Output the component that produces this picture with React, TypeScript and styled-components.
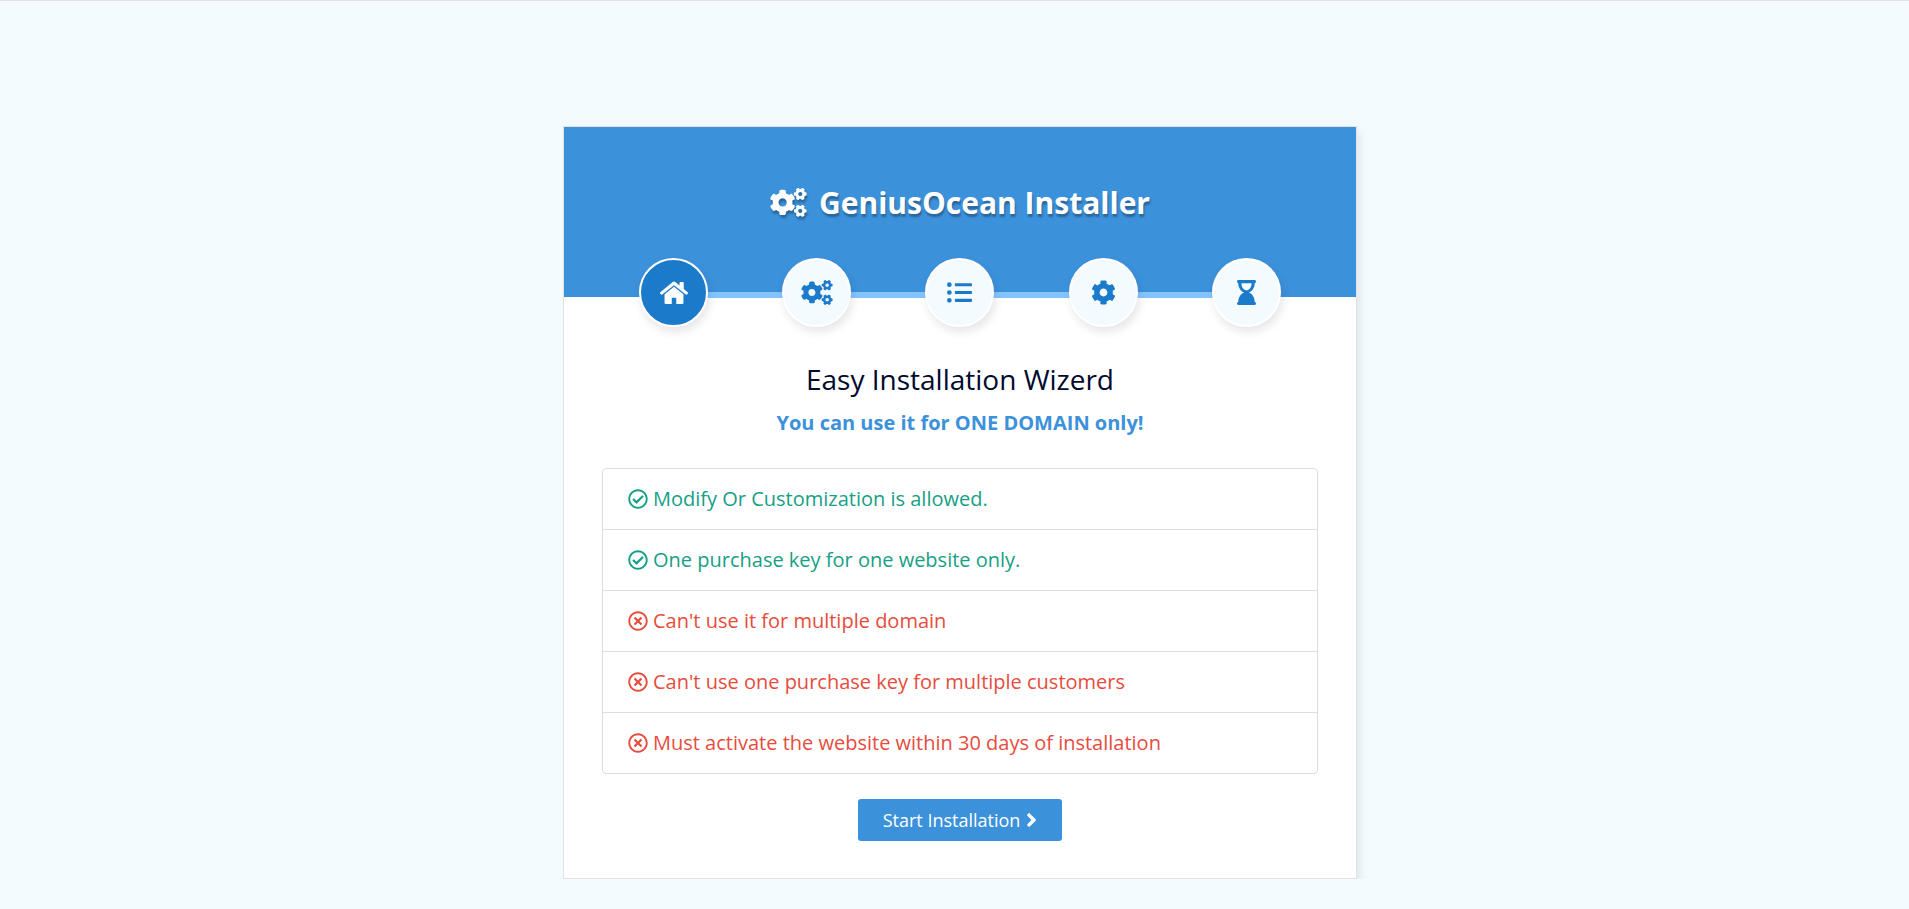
import React from "react";
import styled, { createGlobalStyle } from "styled-components";
import {
  FaCog,
  FaCogs,
  FaHourglassEnd,
  FaListUl,
  FaAngleRight,
  FaRegCheckCircle,
  FaRegTimesCircle,
} from "react-icons/fa";

const GlobalStyle = createGlobalStyle`
  *, *::before, *::after { box-sizing: border-box; }
  body {
    margin: 0;
    background: #f3fbff;
    color: #00092e;
    font-family: "Open Sans", sans-serif;
    font-size: 16px;
  }
`;

const Page = styled.main`
  min-height: 100vh;
  border-top: 1px solid #dee2ee;
  padding: 125px 0 30px 11px;
`;

const Card = styled.section`
  max-width: 794px;
  margin: 0 auto;
  background: #fff;
  border: 1px solid #e2e2e6;
  box-shadow: 2px 5px 10px rgba(0, 0, 0, 0.1);
  clip-path: inset(0 -16px 0 0);
`;

const Header = styled.header`
  height: 170px;
  padding: 53px 38px 0;
  background: #3c91db;
`;

const Title = styled.h1`
  display: flex;
  align-items: center;
  justify-content: center;
  gap: 12px;
  margin: 0 0 33px;
  color: #fff;
  font-size: 30px;
  font-weight: 700;
  line-height: 45px;
  text-shadow: 1px 3px 2px rgba(0, 0, 0, 0.3);

  svg {
    width: 37px;
    height: 29px;
    filter: drop-shadow(1px 3px 1px rgba(0, 0, 0, 0.3));
  }
`;

const Steps = styled.ol`
  position: relative;
  display: grid;
  grid-template-columns: repeat(5, 1fr);
  margin: 0;
  padding: 0;
  list-style: none;

  &::before {
    content: "";
    position: absolute;
    top: 34px;
    left: 10%;
    right: 10%;
    height: 6px;
    background: #83c4ff;
  }
`;

const Step = styled.li<{ $active?: boolean }>`
  position: relative;
  display: flex;
  align-items: center;
  justify-content: center;
  justify-self: center;
  width: 69px;
  height: 69px;
  border: 2px solid #fff;
  border-radius: 50%;
  background: ${(p) => (p.$active ? "#1c7acb" : "#f3fbff")};
  color: ${(p) => (p.$active ? "#fff" : "#1c7acb")};
  box-shadow: 2px 5px 10px rgba(0, 0, 0, 0.1);
`;

const StepIcon = styled.span<{ $width: number }>`
  display: flex;

  svg {
    width: ${(p) => p.$width}px;
    height: 25px;
  }
`;

const Body = styled.div`
  padding: 60px 38px 37px;
  text-align: center;
`;

const Heading = styled.h2`
  margin: 0;
  font-size: 28px;
  font-weight: 400;
  line-height: 44px;
`;

const Notice = styled.p`
  margin: 7px 0 30px;
  color: #3c91db;
  font-size: 20px;
  font-weight: 700;
  line-height: 30px;
`;

const Rules = styled.ul`
  margin: 0 0 25px;
  padding: 0;
  border: 1px solid #dedede;
  border-radius: 4px;
  list-style: none;
  text-align: left;
`;

const Rule = styled.li<{ $allowed: boolean }>`
  display: flex;
  align-items: center;
  gap: 5px;
  padding: 15px 25px;
  color: ${(p) => (p.$allowed ? "#16a085" : "#e74c3c")};
  font-size: 20px;
  line-height: 30px;

  & + & {
    border-top: 1px solid #dedede;
  }
`;

const StartButton = styled.button`
  display: inline-flex;
  align-items: center;
  gap: 6px;
  padding: 6px 25px;
  border: 0;
  border-radius: 3px;
  background: #3c91db;
  color: #fff;
  font: 400 18px/30px "Open Sans", sans-serif;
  cursor: pointer;

  svg {
    width: 11px;
    height: 22px;
  }
`;

const HomeIcon = () => (
  <svg viewBox="0 -3 86 75" fill="currentColor" aria-hidden>
    <path d="M39 2.5q4-3.5 8 0L60 13V5q0-3 3-3h7q3 0 3 3v19l12 9.500q2 2 .5 4l-2 2.500q-2 2-4 .5L43 12 6.500 40.500q-2 1.500-4-.5l-2-2.500q-1.500-2 .5-4z" />
    <path d="M43 17 72 40v26q0 4-4 4H50V54q0-3-3-3h-8q-3 0-3 3v16H18q-4 0-4-4V40z" />
  </svg>
);

const steps = [
  { name: "Welcome", Icon: HomeIcon, width: 28 },
  { name: "Requirements", Icon: FaCogs, width: 32 },
  { name: "Permissions", Icon: FaListUl, width: 25 },
  { name: "Configuration", Icon: FaCog, width: 25 },
  { name: "Finish", Icon: FaHourglassEnd, width: 19 },
];

const rules = [
  { text: "Modify Or Customization is allowed.", allowed: true },
  { text: "One purchase key for one website only.", allowed: true },
  { text: "Can't use it for multiple domain", allowed: false },
  { text: "Can't use one purchase key for multiple customers", allowed: false },
  { text: "Must activate the website within 30 days of installation", allowed: false },
];

export default function App() {
  return (
    <>
      <GlobalStyle />
      <Page>
        <Card>
          <Header>
            <Title>
              <FaCogs aria-hidden />
              <span>GeniusOcean Installer</span>
            </Title>
            <Steps>
              {steps.map(({ name, Icon, width }, i) => (
                <Step key={name} $active={i === 0} aria-label={name}>
                  <StepIcon $width={width}>
                    <Icon />
                  </StepIcon>
                </Step>
              ))}
            </Steps>
          </Header>
          <Body>
            <Heading>Easy Installation Wizerd</Heading>
            <Notice>You can use it for ONE DOMAIN only!</Notice>
            <Rules>
              {rules.map(({ text, allowed }) => (
                <Rule key={text} $allowed={allowed}>
                  {allowed ? <FaRegCheckCircle aria-hidden /> : <FaRegTimesCircle aria-hidden />}
                  <span>{text}</span>
                </Rule>
              ))}
            </Rules>
            <StartButton type="button">
              Start Installation
              <FaAngleRight aria-hidden />
            </StartButton>
          </Body>
        </Card>
      </Page>
    </>
  );
}
